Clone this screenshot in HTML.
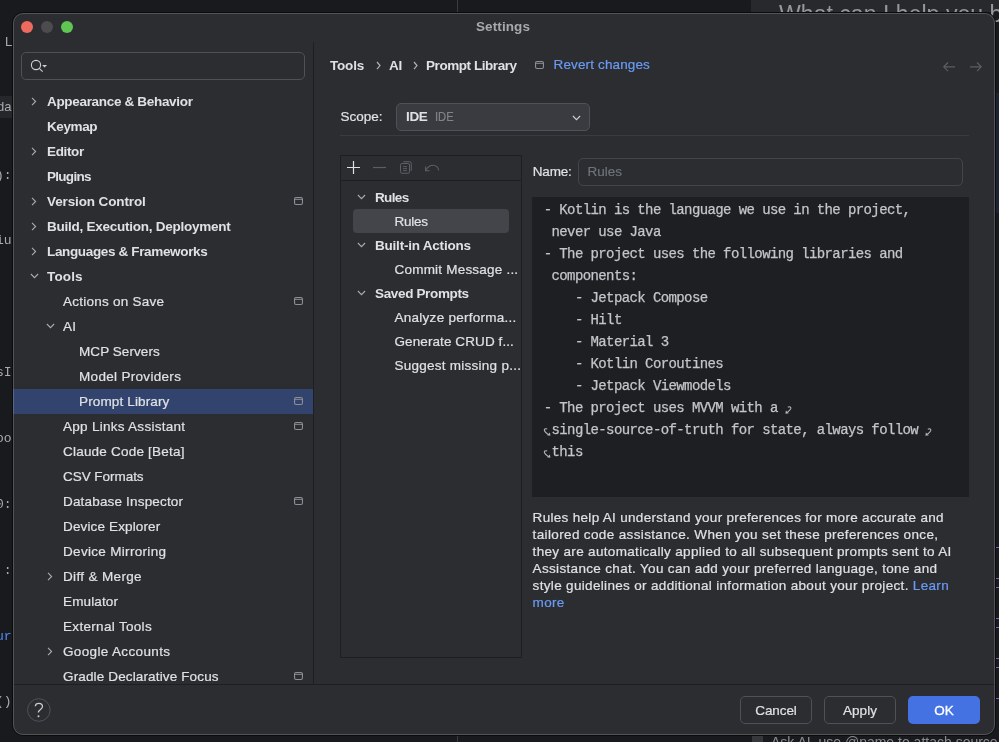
<!DOCTYPE html>
<html><head><meta charset="utf-8">
<style>
*{margin:0;padding:0;box-sizing:border-box}
html,body{width:999px;height:742px;overflow:hidden;background:#191a1d;font-family:"Liberation Sans",sans-serif;font-size:13px;color:#dfe1e5}
.a{position:absolute}
.t{position:absolute;white-space:pre;line-height:25px;height:25px;font-size:13.5px;letter-spacing:0.14px;color:#dfe1e5;-webkit-text-stroke:0.2px currentColor}
.b{font-weight:bold;letter-spacing:-0.35px;-webkit-text-stroke:0}
.m{position:absolute;white-space:pre;font-family:"Liberation Mono",monospace;font-size:14px;letter-spacing:-0.6px;line-height:22px;color:#c3c5ca;-webkit-text-stroke:0.25px #c3c5ca}
svg{position:absolute;overflow:visible}
</style></head><body><div id="root" style="position:absolute;left:0;top:0;width:999px;height:742px;overflow:hidden;will-change:transform">

<div class="a" style="left:751px;top:0;width:248px;height:12px;background:#28292c"></div>
<div class="a" style="left:457px;top:0;width:1px;height:12px;background:#3a3b3f"></div>
<div class="a" style="left:457px;top:735px;width:1px;height:7px;background:#3a3b3f"></div>
<div class="a" style="left:995px;top:93px;width:4px;height:120px;background:#1d2234"></div>
<div class="a" style="left:996px;top:547px;width:3px;height:1px;background:#7a5fc8"></div>
<div class="a" style="left:996px;top:578px;width:3px;height:1px;background:#7a5fc8"></div>
<div class="a" style="left:996px;top:587px;width:3px;height:1px;background:#7a5fc8"></div>
<div class="a" style="left:996px;top:618px;width:3px;height:1px;background:#7a5fc8"></div>
<div class="a" style="left:996px;top:627px;width:3px;height:1px;background:#7a5fc8"></div>
<div class="a" style="left:996px;top:658px;width:3px;height:1px;background:#7a5fc8"></div>
<div class="a" style="left:996px;top:667px;width:3px;height:1px;background:#7a5fc8"></div>
<div class="a" style="left:996px;top:698px;width:3px;height:1px;background:#7a5fc8"></div>
<div class="a" style="left:779px;top:0.5px;font-size:23.1px;color:#95979b;white-space:pre">What can I help you b</div>
<div class="a" style="left:771px;top:734px;font-size:14px;color:#8a8c91;white-space:pre">Ask AI, use @name to attach source f</div>
<div class="a" style="left:-4px;top:167.5px;font-family:'Liberation Mono',monospace;font-size:13px;line-height:normal;color:#a9abb0;white-space:pre">):</div>
<div class="a" style="left:-4px;top:233.4px;font-family:'Liberation Mono',monospace;font-size:13px;line-height:normal;color:#a9abb0;white-space:pre">iu</div>
<div class="a" style="left:-4px;top:364.8px;font-family:'Liberation Mono',monospace;font-size:13px;line-height:normal;color:#a9abb0;white-space:pre">sI</div>
<div class="a" style="left:-4px;top:430.7px;font-family:'Liberation Mono',monospace;font-size:13px;line-height:normal;color:#a9abb0;white-space:pre">oo</div>
<div class="a" style="left:-4px;top:497.2px;font-family:'Liberation Mono',monospace;font-size:13px;line-height:normal;color:#a9abb0;white-space:pre">0:</div>
<div class="a" style="left:-4px;top:562.8px;font-family:'Liberation Mono',monospace;font-size:13px;line-height:normal;color:#a9abb0;white-space:pre"> :</div>
<div class="a" style="left:-4px;top:628.7px;font-family:'Liberation Mono',monospace;font-size:13px;line-height:normal;color:#548af7;white-space:pre">ur</div>
<div class="a" style="left:-4px;top:694px;font-family:'Liberation Mono',monospace;font-size:13px;line-height:normal;color:#a9abb0;white-space:pre">()</div>
<div class="a" style="left:5px;top:34.1px;font-size:13px;line-height:normal;color:#a9abb0">L</div>
<div class="a" style="left:0;top:96px;width:13px;height:22px;background:#26272b"></div>
<div class="a" style="left:-3px;top:99px;font-size:13px;line-height:normal;color:#a9abb0">da</div>
<div class="a" style="left:752px;top:736px;width:11px;height:6px;background:#35373b"></div>
<div class="a" style="left:12px;top:12px;width:984px;height:724px;border-radius:11px;background:#2b2d30;border:1px solid #0b0b0c;"></div>
<div class="a" style="left:21px;top:21px;width:12px;height:12px;border-radius:6px;background:#ee6a5f"></div>
<div class="a" style="left:41px;top:21px;width:12px;height:12px;border-radius:6px;background:#4c4c4e"></div>
<div class="a" style="left:61px;top:21px;width:12px;height:12px;border-radius:6px;background:#5fc553"></div>
<div class="t b" style="left:476px;top:14px;color:#a7a9ad;letter-spacing:0.1px">Settings</div>
<div class="a" style="left:21px;top:52px;width:284px;height:28px;border:1px solid #4e5157;border-radius:5px"></div>
<svg style="left:30px;top:59px" width="20" height="14" viewBox="0 0 20 14"><circle cx="6" cy="6" r="4.6" fill="none" stroke="#ced0d6" stroke-width="1.1"/><line x1="9.3" y1="9.3" x2="12.6" y2="12.6" stroke="#ced0d6" stroke-width="1.1"/><path d="M12.2 6 L17 6 L14.6 8.6 Z" fill="#ced0d6"/></svg>
<div class="a" style="left:313px;top:42px;width:1px;height:642px;background:#1e1f22"></div>
<div class="a" style="left:14px;top:684px;width:981px;height:1px;background:#1e1f22"></div>
<div class="a" style="left:13px;top:84px;width:300px;height:600px;overflow:hidden">
<div class="t b" style="left:34px;top:5px;letter-spacing:-0.320px">Appearance &amp; Behavior</div>
<svg style="left:18px;top:12.5px" width="6" height="9" viewBox="0 0 6 9"><path d="M1 0.9 L4.6 4.5 L1 8.1" fill="none" stroke="#a9acb2" stroke-width="1.1"/></svg>
<div class="t b" style="left:34px;top:30px;letter-spacing:-0.410px">Keymap</div>
<div class="t b" style="left:34px;top:55px;letter-spacing:-0.350px">Editor</div>
<svg style="left:18px;top:62.5px" width="6" height="9" viewBox="0 0 6 9"><path d="M1 0.9 L4.6 4.5 L1 8.1" fill="none" stroke="#a9acb2" stroke-width="1.1"/></svg>
<div class="t b" style="left:34px;top:80px;letter-spacing:-0.717px">Plugins</div>
<div class="t b" style="left:34px;top:105px;letter-spacing:-0.121px">Version Control</div>
<svg style="left:18px;top:112.5px" width="6" height="9" viewBox="0 0 6 9"><path d="M1 0.9 L4.6 4.5 L1 8.1" fill="none" stroke="#a9acb2" stroke-width="1.1"/></svg>
<svg style="left:281px;top:113.0px" width="9" height="8" viewBox="0 0 9 8"><rect x="0.55" y="0.55" width="7.9" height="6.9" rx="1.5" fill="none" stroke="#8b8e94" stroke-width="1.1"/><line x1="0.6" y1="2.3" x2="8.4" y2="2.3" stroke="#8b8e94" stroke-width="1"/></svg>
<div class="t b" style="left:34px;top:130px;letter-spacing:-0.254px">Build, Execution, Deployment</div>
<svg style="left:18px;top:137.5px" width="6" height="9" viewBox="0 0 6 9"><path d="M1 0.9 L4.6 4.5 L1 8.1" fill="none" stroke="#a9acb2" stroke-width="1.1"/></svg>
<div class="t b" style="left:34px;top:155px;letter-spacing:-0.350px">Languages &amp; Frameworks</div>
<svg style="left:18px;top:162.5px" width="6" height="9" viewBox="0 0 6 9"><path d="M1 0.9 L4.6 4.5 L1 8.1" fill="none" stroke="#a9acb2" stroke-width="1.1"/></svg>
<div class="t b" style="left:34px;top:180px;letter-spacing:0.150px">Tools</div>
<svg style="left:17px;top:189.0px" width="9" height="6" viewBox="0 0 9 6"><path d="M0.9 1 L4.5 4.6 L8.1 1" fill="none" stroke="#a9acb2" stroke-width="1.1"/></svg>
<div class="t" style="left:50px;top:205px;letter-spacing:0.240px">Actions on Save</div>
<svg style="left:281px;top:213.0px" width="9" height="8" viewBox="0 0 9 8"><rect x="0.55" y="0.55" width="7.9" height="6.9" rx="1.5" fill="none" stroke="#8b8e94" stroke-width="1.1"/><line x1="0.6" y1="2.3" x2="8.4" y2="2.3" stroke="#8b8e94" stroke-width="1"/></svg>
<div class="t" style="left:50px;top:230px;letter-spacing:0.140px">AI</div>
<svg style="left:33px;top:239.0px" width="9" height="6" viewBox="0 0 9 6"><path d="M0.9 1 L4.5 4.6 L8.1 1" fill="none" stroke="#a9acb2" stroke-width="1.1"/></svg>
<div class="t" style="left:66px;top:255px;letter-spacing:0.070px">MCP Servers</div>
<div class="t" style="left:66px;top:280px;letter-spacing:0.311px">Model Providers</div>
<div class="a" style="left:0px;top:305px;width:300px;height:25px;background:#32446d"></div>
<div class="t" style="left:66px;top:305px;letter-spacing:0.140px">Prompt Library</div>
<svg style="left:281px;top:313.0px" width="9" height="8" viewBox="0 0 9 8"><rect x="0.55" y="0.55" width="7.9" height="6.9" rx="1.5" fill="none" stroke="#8b8e94" stroke-width="1.1"/><line x1="0.6" y1="2.3" x2="8.4" y2="2.3" stroke="#8b8e94" stroke-width="1"/></svg>
<div class="t" style="left:50px;top:330px;letter-spacing:0.279px">App Links Assistant</div>
<svg style="left:281px;top:338.0px" width="9" height="8" viewBox="0 0 9 8"><rect x="0.55" y="0.55" width="7.9" height="6.9" rx="1.5" fill="none" stroke="#8b8e94" stroke-width="1.1"/><line x1="0.6" y1="2.3" x2="8.4" y2="2.3" stroke="#8b8e94" stroke-width="1"/></svg>
<div class="t" style="left:50px;top:355px;letter-spacing:0.211px">Claude Code [Beta]</div>
<div class="t" style="left:50px;top:380px;letter-spacing:-0.040px">CSV Formats</div>
<div class="t" style="left:50px;top:405px;letter-spacing:0.175px">Database Inspector</div>
<svg style="left:281px;top:413.0px" width="9" height="8" viewBox="0 0 9 8"><rect x="0.55" y="0.55" width="7.9" height="6.9" rx="1.5" fill="none" stroke="#8b8e94" stroke-width="1.1"/><line x1="0.6" y1="2.3" x2="8.4" y2="2.3" stroke="#8b8e94" stroke-width="1"/></svg>
<div class="t" style="left:50px;top:430px;letter-spacing:0.140px">Device Explorer</div>
<div class="t" style="left:50px;top:455px;letter-spacing:0.313px">Device Mirroring</div>
<div class="t" style="left:50px;top:480px;letter-spacing:0.349px">Diff &amp; Merge</div>
<svg style="left:34px;top:487.5px" width="6" height="9" viewBox="0 0 6 9"><path d="M1 0.9 L4.6 4.5 L1 8.1" fill="none" stroke="#a9acb2" stroke-width="1.1"/></svg>
<div class="t" style="left:50px;top:505px;letter-spacing:0.140px">Emulator</div>
<div class="t" style="left:50px;top:530px;letter-spacing:0.317px">External Tools</div>
<div class="t" style="left:50px;top:555px;letter-spacing:0.354px">Google Accounts</div>
<svg style="left:34px;top:562.5px" width="6" height="9" viewBox="0 0 6 9"><path d="M1 0.9 L4.6 4.5 L1 8.1" fill="none" stroke="#a9acb2" stroke-width="1.1"/></svg>
<div class="t" style="left:50px;top:580px;letter-spacing:0.140px">Gradle Declarative Focus</div>
<svg style="left:281px;top:588.0px" width="9" height="8" viewBox="0 0 9 8"><rect x="0.55" y="0.55" width="7.9" height="6.9" rx="1.5" fill="none" stroke="#8b8e94" stroke-width="1.1"/><line x1="0.6" y1="2.3" x2="8.4" y2="2.3" stroke="#8b8e94" stroke-width="1"/></svg>
</div>
<svg style="left:25px;top:696px" width="28" height="28" viewBox="0 0 28 28"><circle cx="13.85" cy="14" r="11.3" fill="none" stroke="#4e5157" stroke-width="1"/><path d="M10.3 10.2 C10.5 8 12 7.3 13.8 7.3 C16 7.3 17.5 8.7 17.5 10.6 C17.5 12.4 16 13.2 14.7 14.2 C13.6 15 13.3 15.6 13.3 16.6" fill="none" stroke="#c9cbd0" stroke-width="1.3"/><circle cx="13.5" cy="20.2" r="1" fill="#c9cbd0"/></svg>
<div class="a" style="left:740px;top:696px;width:72px;height:28px;border:1px solid #4e5157;border-radius:5px;line-height:27px;text-align:center;letter-spacing:-0.1px;font-size:13.5px;-webkit-text-stroke:0.2px currentColor">Cancel</div>
<div class="a" style="left:824px;top:696px;width:72px;height:28px;border:1px solid #4e5157;border-radius:5px;line-height:27px;text-align:center;letter-spacing:0px;font-size:13.5px;-webkit-text-stroke:0.2px currentColor">Apply</div>
<div class="a" style="left:908px;top:696px;width:72px;height:28px;background:#4472e3;border-radius:5px;line-height:29px;text-align:center;color:#fff;letter-spacing:0px;font-size:13.5px;-webkit-text-stroke:0.3px currentColor">OK</div>
<div class="t b" style="left:330px;top:57px;line-height:18px;height:18px;letter-spacing:-0.2px">Tools</div>
<svg style="left:376px;top:61px" width="5" height="9" viewBox="0 0 5 9"><path d="M1 1 L4 4.6 L1 8.2" fill="none" stroke="#b0b3b8" stroke-width="1.2"/></svg>
<div class="t b" style="left:389px;top:57px;line-height:18px;height:18px">AI</div>
<svg style="left:413px;top:61px" width="5" height="9" viewBox="0 0 5 9"><path d="M1 1 L4 4.6 L1 8.2" fill="none" stroke="#b0b3b8" stroke-width="1.2"/></svg>
<div class="t b" style="left:426px;top:57px;line-height:18px;height:18px;letter-spacing:-0.44px">Prompt Library</div>
<svg style="left:535px;top:61px" width="9" height="8" viewBox="0 0 9 8"><rect x="0.55" y="0.55" width="7.9" height="6.9" rx="1.5" fill="none" stroke="#8b8e94" stroke-width="1.1"/><line x1="0.6" y1="2.3" x2="8.4" y2="2.3" stroke="#8b8e94" stroke-width="1"/></svg>
<div class="t" style="left:553.5px;top:56px;line-height:18px;height:18px;color:#6b9bf5">Revert changes</div>
<svg style="left:943px;top:62px" width="13" height="10" viewBox="0 0 13 10"><path d="M5 0.5 L0.8 4.8 L5 9.1 M0.8 4.8 L12 4.8" fill="none" stroke="#5b5e64" stroke-width="1.2"/></svg>
<svg style="left:968.5px;top:62px" width="13" height="10" viewBox="0 0 13 10"><path d="M8 0.5 L12.2 4.8 L8 9.1 M12.2 4.8 L1 4.8" fill="none" stroke="#5b5e64" stroke-width="1.2"/></svg>
<div class="t" style="left:340.5px;top:104px;line-height:25px;letter-spacing:0px">Scope:</div>
<div class="a" style="left:396px;top:103px;width:194px;height:28px;background:#393b40;border:1px solid #4e5157;border-radius:5px"></div>
<div class="t b" style="left:406px;top:104px">IDE</div>
<div class="t" style="left:435.3px;top:104px;color:#808389;letter-spacing:0px;transform:scaleX(0.83);transform-origin:0 0">IDE</div>
<svg style="left:571.5px;top:114.5px" width="9" height="6" viewBox="0 0 9 6"><path d="M0.9 1 L4.5 4.6 L8.1 1" fill="none" stroke="#ced0d6" stroke-width="1.1"/></svg>
<div class="a" style="left:340px;top:135px;width:629px;height:1px;background:#393b40"></div>
<div class="a" style="left:340px;top:155px;width:182px;height:503px;border:1px solid #1e1f22"></div>
<div class="a" style="left:341px;top:180px;width:180px;height:1px;background:#1e1f22"></div>
<svg style="left:347px;top:161px" width="14" height="14" viewBox="0 0 14 14"><path d="M6.5 0 V13 M0 6.5 H13" stroke="#dfe1e5" stroke-width="1.2"/></svg>
<svg style="left:373px;top:161px" width="14" height="14" viewBox="0 0 14 14"><path d="M0 6.5 H13" stroke="#5b5e64" stroke-width="1.2"/></svg>
<svg style="left:395px;top:157px" width="20" height="20" viewBox="0 0 20 20"><rect x="5.5" y="6.5" width="9" height="9.75" rx="1.6" fill="none" stroke="#5d6066" stroke-width="1"/><path d="M8.3 4.75 H14.7 Q16.25 4.75 16.25 6.3 V13.9" fill="none" stroke="#5d6066" stroke-width="1"/><path d="M8 9.6 H12 M8 11.6 H12 M8 13.6 H12" stroke="#5d6066" stroke-width="0.9"/></svg>
<svg style="left:395px;top:157px" width="50" height="20" viewBox="0 0 50 20"><path d="M43.6 13.6 C43.6 10.2 40.8 8.25 38 8.25 C35.2 8.25 32.6 10 30.8 13.2" fill="none" stroke="#5d6066" stroke-width="1.05"/><path d="M30.6 9.6 V13.7 H34.6" fill="none" stroke="#5d6066" stroke-width="1.05"/></svg>
<div class="a" style="left:341px;top:181px;width:180px;height:475px;overflow:hidden">
<div class="t b" style="left:34px;top:5px;line-height:24px;height:24px;letter-spacing:-0.650px">Rules</div>
<svg style="left:15.5px;top:12.5px" width="9" height="6" viewBox="0 0 9 6"><path d="M0.9 1 L4.5 4.6 L8.1 1" fill="none" stroke="#a9acb2" stroke-width="1.1"/></svg>
<div class="a" style="left:12px;top:28px;width:156px;height:24px;background:#43454a;border-radius:4px"></div>
<div class="t" style="left:53.5px;top:29px;line-height:24px;height:24px;letter-spacing:-0.235px">Rules</div>
<div class="t b" style="left:34px;top:53px;line-height:24px;height:24px;letter-spacing:-0.217px">Built-in Actions</div>
<svg style="left:15.5px;top:60.5px" width="9" height="6" viewBox="0 0 9 6"><path d="M0.9 1 L4.5 4.6 L8.1 1" fill="none" stroke="#a9acb2" stroke-width="1.1"/></svg>
<div class="t" style="left:53.5px;top:77px;line-height:24px;height:24px;letter-spacing:0.211px">Commit Message ...</div>
<div class="t b" style="left:34px;top:101px;line-height:24px;height:24px;letter-spacing:-0.350px">Saved Prompts</div>
<svg style="left:15.5px;top:108.5px" width="9" height="6" viewBox="0 0 9 6"><path d="M0.9 1 L4.5 4.6 L8.1 1" fill="none" stroke="#a9acb2" stroke-width="1.1"/></svg>
<div class="t" style="left:53.5px;top:125px;line-height:24px;height:24px;letter-spacing:0.268px">Analyze performa...</div>
<div class="t" style="left:53.5px;top:149px;line-height:24px;height:24px;letter-spacing:0.093px">Generate CRUD f...</div>
<div class="t" style="left:53.5px;top:173px;line-height:24px;height:24px;letter-spacing:0.256px">Suggest missing p...</div>
</div>
<div class="t" style="left:532.8px;top:159px;line-height:25px;letter-spacing:-0.2px">Name:</div>
<div class="a" style="left:578px;top:158px;width:385px;height:28px;border:1px solid #43454a;border-radius:5px"></div>
<div class="t" style="left:587.5px;top:159px;color:#6f737a;letter-spacing:0px">Rules</div>
<div class="a" style="left:532px;top:197px;width:437px;height:300px;background:#1e1f22"></div>
<div class="m" style="left:543.70px;top:198.8px">- Kotlin is the language we use in the project,</div>
<div class="m" style="left:551.50px;top:220.8px">never use Java</div>
<div class="m" style="left:543.70px;top:242.8px">- The project uses the following libraries and</div>
<div class="m" style="left:551.50px;top:264.8px">components:</div>
<div class="m" style="left:574.90px;top:286.8px">- Jetpack Compose</div>
<div class="m" style="left:574.90px;top:308.8px">- Hilt</div>
<div class="m" style="left:574.90px;top:330.8px">- Material 3</div>
<div class="m" style="left:574.90px;top:352.8px">- Kotlin Coroutines</div>
<div class="m" style="left:574.90px;top:374.8px">- Jetpack Viewmodels</div>
<div class="m" style="left:543.70px;top:396.8px">- The project uses MVVM with a </div>
<svg style="left:784.7px;top:405.8px" width="7" height="8" viewBox="0 0 7 8"><path d="M2.8 1.2 C4.8 0.2 6.2 1.2 5.8 2.7 C5.4 4 3.8 5.2 2.4 6.3" fill="none" stroke="#b4b6bb" stroke-width="1.1"/><path d="M0.4 7.8 L0.9 4.5 L3.9 7.3 Z" fill="#b4b6bb"/></svg>
<div class="m" style="left:551.50px;top:418.8px">single-source-of-truth for state, always follow </div>
<svg style="left:925.1px;top:427.8px" width="7" height="8" viewBox="0 0 7 8"><path d="M2.8 1.2 C4.8 0.2 6.2 1.2 5.8 2.7 C5.4 4 3.8 5.2 2.4 6.3" fill="none" stroke="#b4b6bb" stroke-width="1.1"/><path d="M0.4 7.8 L0.9 4.5 L3.9 7.3 Z" fill="#b4b6bb"/></svg>
<svg style="left:544.3px;top:427.8px" width="7" height="8" viewBox="0 0 7 8"><path d="M3.2 0.9 C1.2 0.2 -0.2 1.4 0.5 2.8 C1 4 2.4 5.2 3.9 6.2" fill="none" stroke="#b4b6bb" stroke-width="1.1"/><path d="M6.4 7.8 L5.9 4.5 L2.9 7.3 Z" fill="#b4b6bb"/></svg>
<div class="m" style="left:551.50px;top:440.8px">this</div>
<svg style="left:544.3px;top:449.8px" width="7" height="8" viewBox="0 0 7 8"><path d="M3.2 0.9 C1.2 0.2 -0.2 1.4 0.5 2.8 C1 4 2.4 5.2 3.9 6.2" fill="none" stroke="#b4b6bb" stroke-width="1.1"/><path d="M6.4 7.8 L5.9 4.5 L2.9 7.3 Z" fill="#b4b6bb"/></svg>
<div class="t" style="left:532.6px;top:508.7px;line-height:17px;height:17px;letter-spacing:0.31px">Rules help AI understand your preferences for more accurate and</div>
<div class="t" style="left:532.6px;top:525.7px;line-height:17px;height:17px;letter-spacing:0.36px">tailored code assistance. When you set these preferences once,</div>
<div class="t" style="left:532.6px;top:542.7px;line-height:17px;height:17px;letter-spacing:0.33px">they are automatically applied to all subsequent prompts sent to AI</div>
<div class="t" style="left:532.6px;top:559.7px;line-height:17px;height:17px;letter-spacing:0.33px">Assistance chat. You can add your preferred language, tone and</div>
<div class="t" style="left:532.6px;top:576.7px;line-height:17px;height:17px;letter-spacing:0.33px">style guidelines or additional information about your project. <span style="color:#6b9bf5">Learn</span></div>
<div class="t" style="left:532.6px;top:593.7px;line-height:17px;height:17px;letter-spacing:0.33px;color:#6b9bf5">more</div>
<div class="a" style="left:13px;top:13px;width:982px;height:722px;border-radius:10px;border:1px solid rgba(255,255,255,0.19);"></div>
</div></body></html>
